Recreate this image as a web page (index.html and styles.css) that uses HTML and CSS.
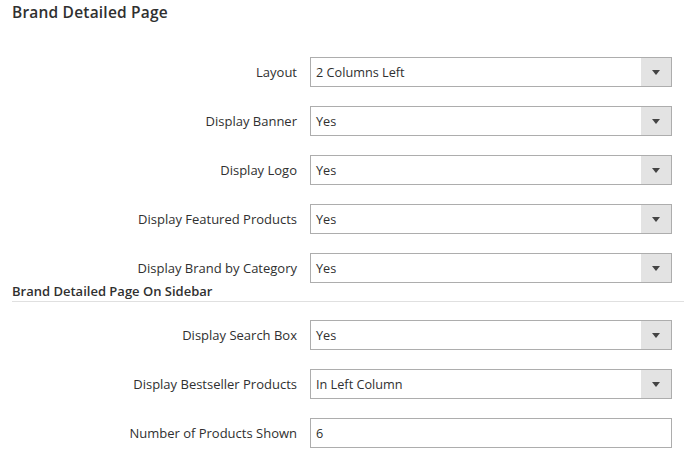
FILE: index.html
```html
<!DOCTYPE html>
<html lang="en">
<head>
  <title>Brand Detailed Page</title>
  <link rel="stylesheet" href="styles.css">
</head>
<body>
<div class="config">
  <h2 class="config-title">Brand Detailed Page</h2>
  <div class="fieldset">
    <div class="field">
      <label class="field-label">Layout</label>
      <div class="control select"><span>2 Columns Left</span><i class="arrow"></i></div>
    </div>
    <div class="field">
      <label class="field-label">Display Banner</label>
      <div class="control select"><span>Yes</span><i class="arrow"></i></div>
    </div>
    <div class="field">
      <label class="field-label">Display Logo</label>
      <div class="control select"><span>Yes</span><i class="arrow"></i></div>
    </div>
    <div class="field">
      <label class="field-label">Display Featured Products</label>
      <div class="control select"><span>Yes</span><i class="arrow"></i></div>
    </div>
    <div class="field">
      <label class="field-label">Display Brand by Category</label>
      <div class="control select"><span>Yes</span><i class="arrow"></i></div>
    </div>
  </div>
  <h3 class="section-title">Brand Detailed Page On Sidebar</h3>
  <div class="fieldset">
    <div class="field">
      <label class="field-label">Display Search Box</label>
      <div class="control select"><span>Yes</span><i class="arrow"></i></div>
    </div>
    <div class="field">
      <label class="field-label">Display Bestseller Products</label>
      <div class="control select"><span>In Left Column</span><i class="arrow"></i></div>
    </div>
    <div class="field">
      <label class="field-label">Number of Products Shown</label>
      <div class="control text"><span>6</span></div>
    </div>
  </div>
</div>
</body>
</html>
```

FILE: styles.css
```css
body {
  margin: 0;
  font-family: 'Open Sans', sans-serif;
  color: #303030;
  background: #fff;
}

.config {
  padding: 0 1px 0 12px;
}

.config-title {
  font-size: 15.5px;
  font-weight: 600;
  margin: 0;
  padding-top: 1px;
  line-height: 22px;
  letter-spacing: 0.2px;
}

.fieldset {
  display: flex;
  flex-direction: column;
  gap: 19px;
}

.config-title + .fieldset {
  margin-top: 34px;
}

.field {
  display: flex;
  align-items: center;
}

.field-label {
  width: 285px;
  text-align: right;
  font-size: 13px;
  margin-right: 13px;
}

.control {
  box-sizing: border-box;
  width: 362px;
  height: 30px;
  border: 1px solid #adadad;
  display: flex;
  align-items: center;
  font-size: 12.7px;
  background: #fff;
}

.control span {
  flex: 1;
  padding-left: 5px;
}

.arrow {
  width: 30px;
  height: 100%;
  background: #e3e3e3;
  position: relative;
}

.arrow::after {
  content: "";
  position: absolute;
  left: 11px;
  top: 12px;
  border-left: 4px solid transparent;
  border-right: 4px solid transparent;
  border-top: 5px solid #444;
}

.section-title {
  font-size: 13px;
  font-weight: 600;
  margin: 0 0 18px;
  line-height: 17px;
  border-bottom: 1px solid #e0e0e0;
  padding-bottom: 1px;
}
```
